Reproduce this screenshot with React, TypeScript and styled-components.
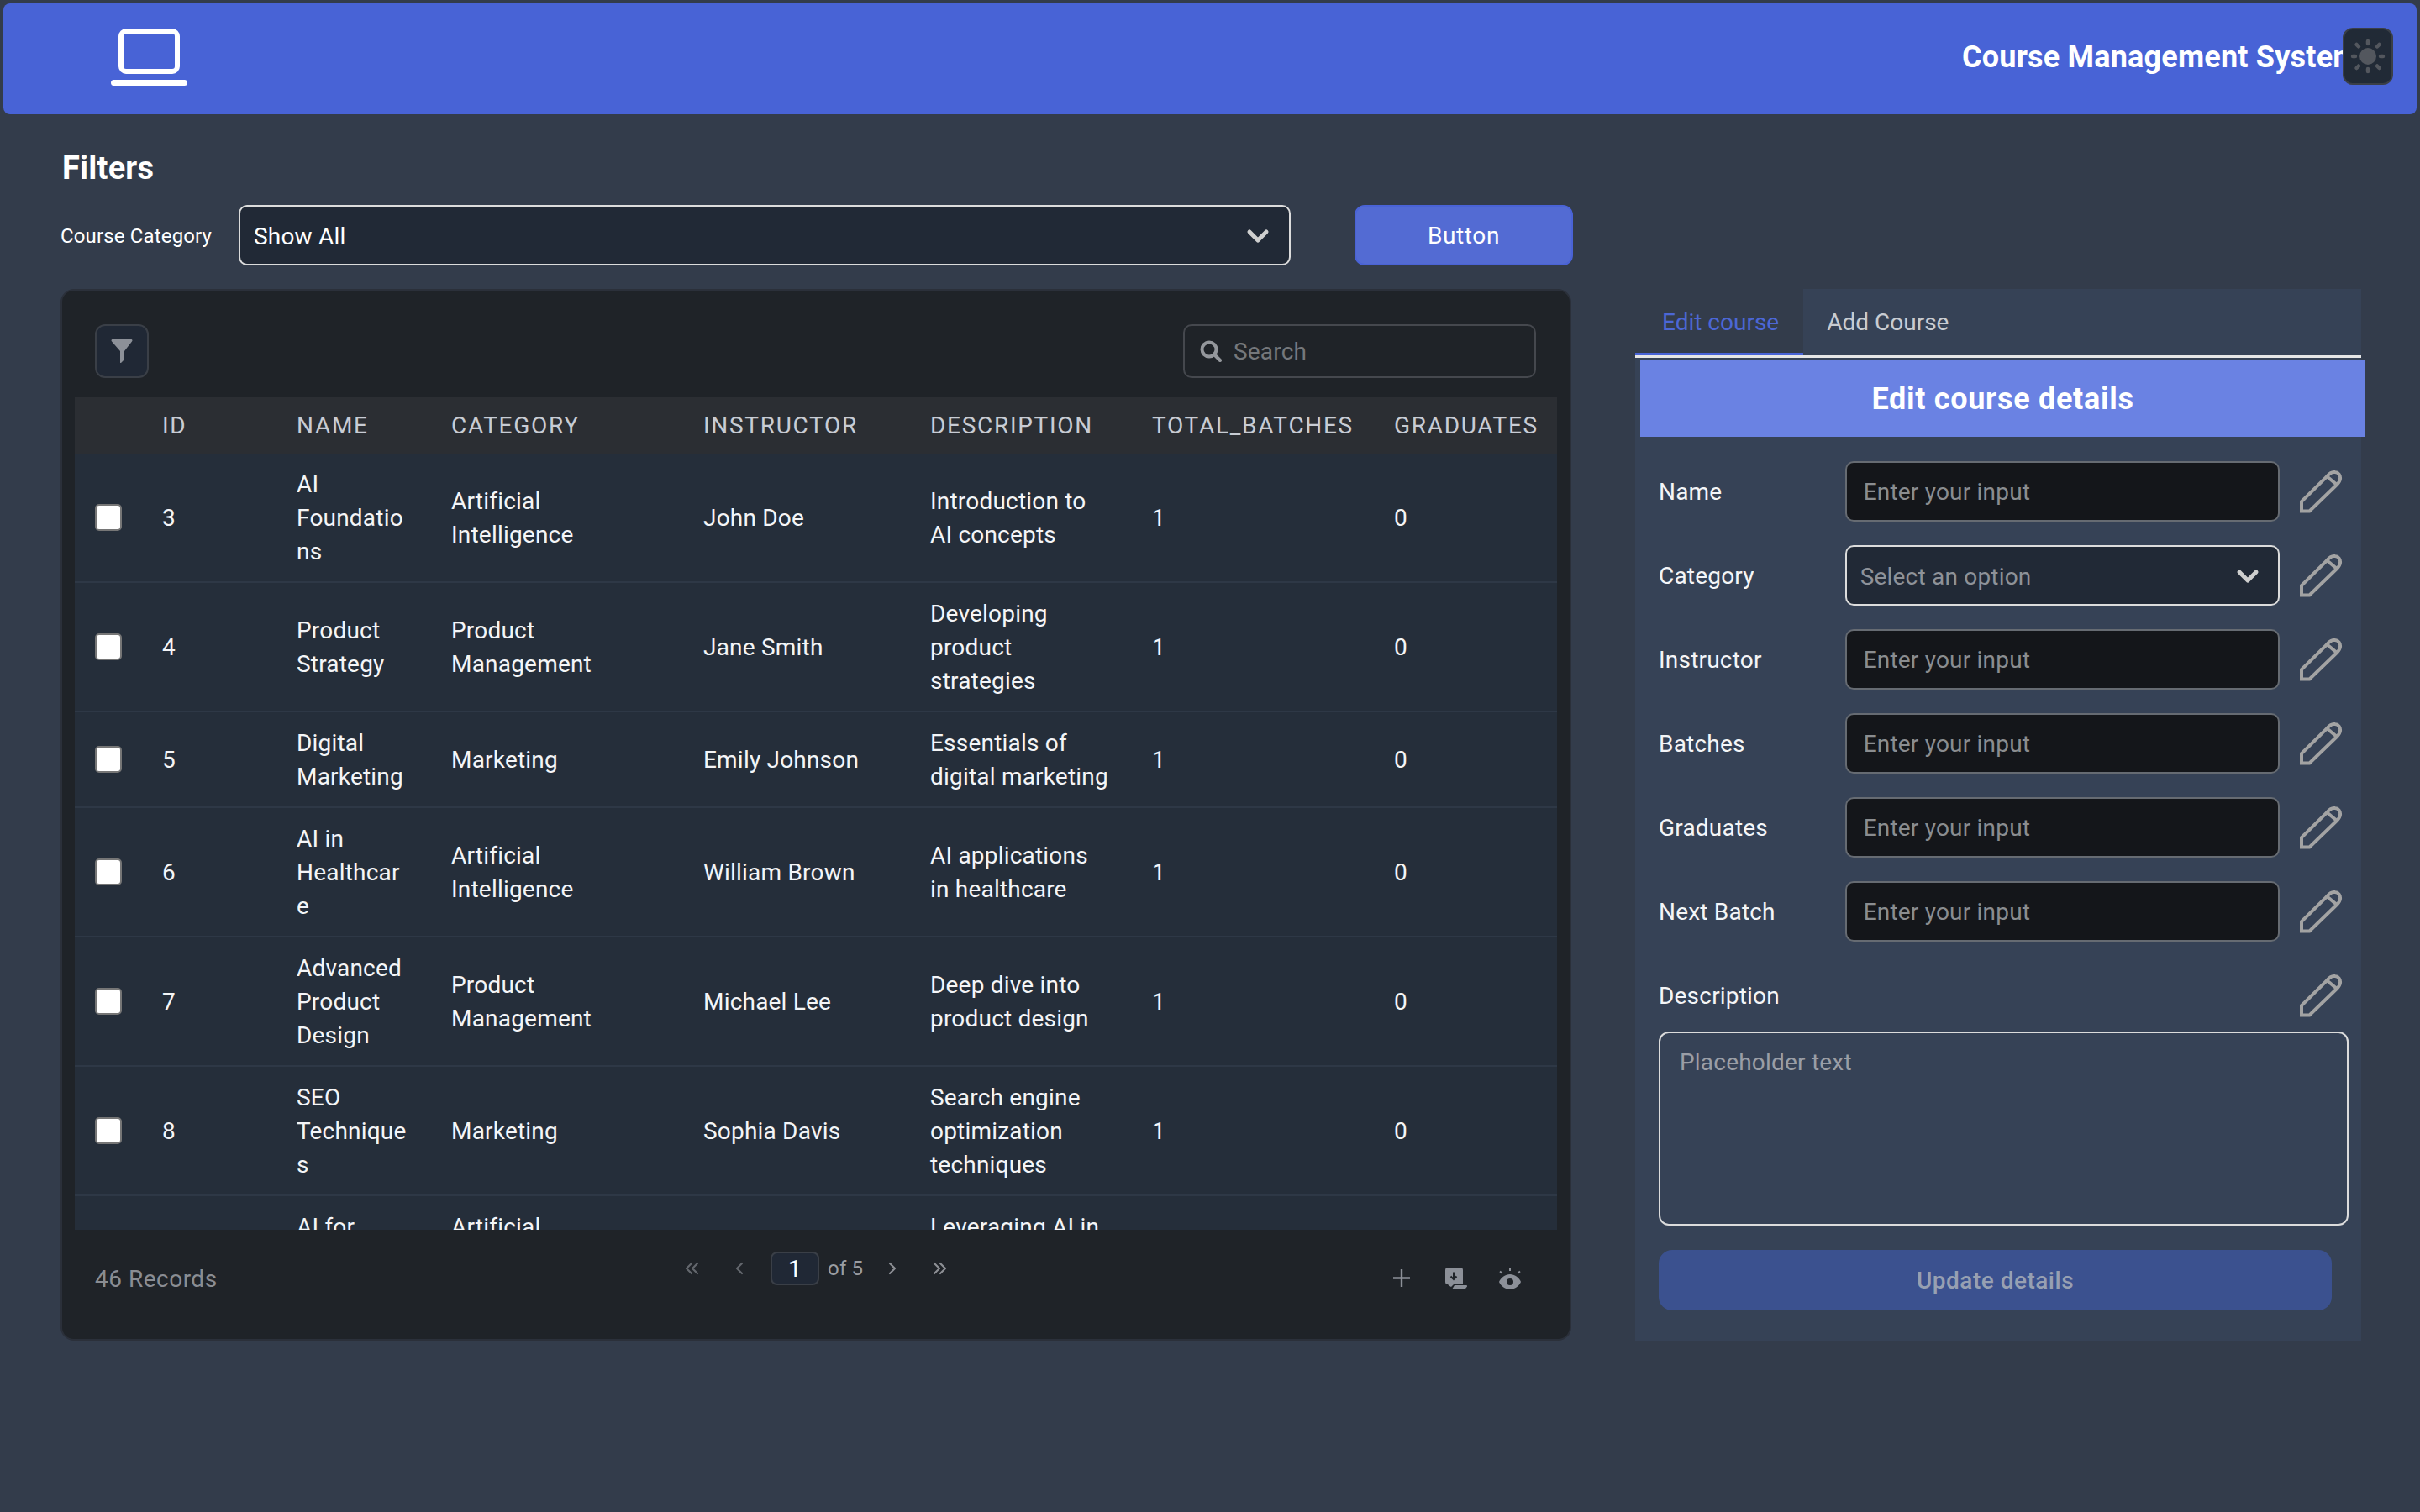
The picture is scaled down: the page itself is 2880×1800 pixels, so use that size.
import styled, { createGlobalStyle } from 'styled-components';

const GlobalStyle = createGlobalStyle`
  html, body {
    margin: 0;
    padding: 0;
    background: #333c4b;
  }
  * {
    box-sizing: border-box;
  }
`;

const FONT = `Roboto, "Noto Sans", sans-serif`;

const Page = styled.div`
  width: 2880px;
  height: 1800px;
  padding: 4px 4px 0;
  background: #333c4b;
  color: #fff;
  font-family: ${FONT};
  font-size: 28px;
  letter-spacing: 0.2px;
  overflow: hidden;
`;

const Header = styled.header`
  height: 132px;
  background: #4863d6;
  border-radius: 8px;
  display: flex;
  align-items: center;
  justify-content: space-between;
  padding: 0 28px 4px 128px;
`;

const HeaderRight = styled.div`
  display: flex;
  align-items: center;
  width: 513px;
`;

const HeaderTitle = styled.h1`
  margin: 0;
  flex: 0 0 453px;
  font-size: 36px;
  font-weight: 700;
  white-space: nowrap;
  overflow: hidden;
`;

const ThemeButton = styled.button`
  flex: 0 0 60px;
  height: 68px;
  margin-bottom: 2px;
  padding: 0;
  display: flex;
  align-items: center;
  justify-content: center;
  background: #212a36;
  border: 2px solid #3a3f47;
  border-radius: 12px;
`;

const Main = styled.main`
  padding: 0 64px 0 68px;
`;

const FiltersTitle = styled.h2`
  margin: 0;
  padding: 40px 0 0 2px;
  height: 108px;
  font-size: 38px;
  line-height: 48px;
  font-weight: 700;
`;

const FilterRow = styled.div`
  display: flex;
  align-items: center;
  height: 72px;
`;

const FilterLabel = styled.label`
  width: 212px;
  font-size: 24px;
  font-weight: 400;
  letter-spacing: 0.15px;
  padding-top: 1px;
`;

const SelectBox = styled.div<{ $compact?: boolean }>`
  display: flex;
  align-items: center;
  justify-content: space-between;
  height: 72px;
  width: ${(p) => (p.$compact ? '518px' : '1252px')};
  padding: 2px ${(p) => (p.$compact ? '22px' : '23px')} 0 16px;
  background: #212936;
  border: 2px solid #dcdcdc;
  border-radius: 10px;
  color: ${(p) => (p.$compact ? '#8e9299' : '#fff')};
`;

const FilterButton = styled.button`
  margin-left: 76px;
  width: 260px;
  height: 72px;
  background: #536bd3;
  border: 2px solid #4a63d6;
  border-radius: 12px;
  color: #fff;
  font: 400 28px ${FONT};
  letter-spacing: 0.6px;
`;

const Columns = styled.div`
  display: flex;
  align-items: flex-start;
  gap: 76px;
  margin-top: 28px;
`;

const TableCard = styled.section`
  flex: 0 0 1798px;
  height: 1252px;
  background: #1f2328;
  border: 2px solid #2b303a;
  border-radius: 16px;
  padding: 40px 15px 0;
`;

const TableToolbar = styled.div`
  display: flex;
  justify-content: space-between;
  height: 87px;
  padding: 0 25px 0 24px;
`;

const IconButton = styled.button`
  width: 64px;
  height: 64px;
  padding: 0;
  display: flex;
  align-items: center;
  justify-content: center;
  background: #202835;
  border: 2px solid #3a3f47;
  border-radius: 12px;
`;

const SearchBox = styled.div`
  width: 420px;
  height: 64px;
  display: flex;
  align-items: center;
  gap: 14px;
  padding: 0 18px;
  border: 2px solid #45484e;
  border-radius: 10px;
  color: #75787c;
`;

const TableWrap = styled.div`
  height: 991px;
  overflow: hidden;
`;

const Table = styled.table`
  width: 1764px;
  table-layout: fixed;
  border-collapse: collapse;
`;

const HeadRow = styled.tr`
  height: 67px;
  background: #2b2e33;
`;

const HeadCell = styled.th`
  padding: 0 0 0 24px;
  text-align: left;
  font-size: 28px;
  font-weight: 400;
  letter-spacing: 1.7px;
  color: #c8ccd4;
  white-space: nowrap;
`;

const Row = styled.tr`
  background: #252e3a;
  border-bottom: 2px solid #2e3846;
`;

const Cell = styled.td`
  padding: 17px 26px 15px 24px;
  line-height: 40px;
  overflow-wrap: anywhere;
  color: #f4f5f7;
`;

const Check = styled.span`
  display: block;
  width: 32px;
  height: 32px;
  margin-top: -2px;
  background: #fff;
  border: 2px solid #767676;
  border-radius: 5px;
`;

const TableFooter = styled.div`
  display: grid;
  grid-template-columns: 683px 1fr auto;
  align-items: center;
  height: 64px;
  margin-top: 26px;
  padding: 0 43px 0 24px;
`;

const Records = styled.div`
  color: #8a8d93;
  letter-spacing: 0.5px;
`;

const Pager = styled.div`
  align-self: start;
  display: flex;
  align-items: center;
  height: 40px;
  font-size: 24px;
`;

const PageArrow = styled.span`
  width: 56px;
  display: flex;
  justify-content: center;
`;

const PageInput = styled.span`
  width: 58px;
  height: 40px;
  margin: 0 10px 0 9px;
  display: flex;
  align-items: center;
  justify-content: center;
  background: #202835;
  border: 2px solid #3a3f47;
  border-radius: 8px;
  color: #fff;
  font-size: 28px;
`;

const PageOf = styled.span`
  width: 49px;
  color: #9a9da2;
`;

const FooterIcons = styled.div`
  display: flex;
  align-items: center;
  gap: 38px;
`;

const SidePanel = styled.aside`
  flex: 0 0 864px;
  min-width: 0;
  height: 1252px;
  background: #364256;
`;

const Tabs = styled.div`
  display: flex;
  height: 82px;
  border-bottom: 3px solid #e6e6e6;
  letter-spacing: 0;
`;

const Tab = styled.div<{ $active?: boolean }>`
  display: flex;
  align-items: center;
  padding: ${(p) => (p.$active ? '0 29px 0 32px' : '0 28px')};
  background: ${(p) => (p.$active ? '#333c4b' : 'transparent')};
  color: ${(p) => (p.$active ? '#4c67d6' : '#c8ccd2')};
  box-shadow: ${(p) => (p.$active ? 'inset 0 -3px 0 #4863d6' : 'none')};
`;

const PanelTitle = styled.h3`
  width: 863px;
  height: 92px;
  margin: 2px 0 0 6px;
  padding-top: 2px;
  display: flex;
  align-items: center;
  justify-content: center;
  background: #6a82e3;
  font-size: 36px;
  font-weight: 700;
  letter-spacing: 0.7px;
`;

const Form = styled.div`
  padding: 29px 22px 0 28px;
`;

const FormRow = styled.div`
  display: flex;
  align-items: center;
  height: 72px;
  margin-bottom: 28px;
`;

const FormLabel = styled.label`
  width: 222px;
  color: #f4f5f7;
`;

const TextInput = styled.div`
  width: 518px;
  height: 72px;
  display: flex;
  align-items: center;
  padding-left: 20px;
  background: #14161a;
  border: 2px solid #666b72;
  border-radius: 10px;
  color: #8a8d90;
`;

const EditSlot = styled.div`
  margin-left: 23px;
  width: 52px;
  height: 52px;
`;

const DescRow = styled.div`
  display: flex;
  align-items: center;
  justify-content: space-between;
  height: 52px;
  margin: 38px 0 17px;
`;

const TextArea = styled.div`
  width: 821px;
  height: 231px;
  padding: 18px 23px;
  border: 2px solid #dcdcdc;
  border-radius: 12px;
  color: #9a9ea6;
`;

const UpdateButton = styled.button`
  display: block;
  width: 801px;
  height: 72px;
  margin-top: 29px;
  background: #3b518f;
  border: 0;
  border-radius: 16px;
  color: #97a0b2;
  font: 500 28px ${FONT};
  letter-spacing: 0.5px;
`;

const Chevron = () => (
  <svg width="28" height="18" viewBox="0 0 28 18" fill="none" stroke="#cfcfcf" strokeWidth="5" strokeLinecap="round" strokeLinejoin="round">
    <path d="M4 4l10 10L24 4" />
  </svg>
);

const Pencil = () => (
  <svg width="52" height="52" viewBox="0 0 52 52" fill="none" stroke="#a3a3a3" strokeWidth="4">
    <path d="M3 49.500V38L33 8.500C36 4.500 40 2.500 43 3C47 3.500 49.500 7 49 11C48.700 14 47 16 45 18L12.500 49.500Z" />
    <path d="M33 8L45 18" />
  </svg>
);

const SunIcon = () => (
  <svg width="42" height="44" viewBox="0 0 42 44" fill="#53575e">
    <circle cx="21" cy="22" r="10" />
    <g stroke="#53575e" strokeWidth="4.500" strokeLinecap="round">
      <path d="M21 4v3M21 37v3M3 22h3M36 22h3M7.500 8l2.500 2.500M32 33.500l2.500 2.500M34.500 8L32 10.500M10 33.500L7.500 36" />
    </g>
  </svg>
);

const LaptopIcon = () => (
  <svg width="92" height="68" viewBox="0 0 92 68" fill="none" stroke="#fff" strokeWidth="6">
    <rect x="12" y="3" width="67" height="48" rx="6" />
    <path d="M3.500 64.500h84" strokeWidth="7" strokeLinecap="round" />
  </svg>
);

const FunnelIcon = () => (
  <svg width="26" height="28" viewBox="0 0 26 28" fill="#8c9098">
    <path d="M2 0h22c1.500 0 2 1.500 1 2.500L16 14v10l-4 4c-.5.300-1 0-1-.6V14L1 2.500C0 1.500.5 0 2 0z" />
  </svg>
);

const SearchIcon = () => (
  <svg width="26" height="26" viewBox="0 0 26 26" fill="none" stroke="#94979c" strokeWidth="4" strokeLinecap="round">
    <circle cx="11" cy="11" r="8.500" />
    <path d="M18 18l6 6" />
  </svg>
);

const ArrowIcon = ({ d, color }: { d: string; color: string }) => (
  <svg width="24" height="24" viewBox="0 0 24 24" fill="none" stroke={color} strokeWidth="2.200" strokeLinecap="round" strokeLinejoin="round">
    <path d={d} />
  </svg>
);

const PlusIcon = () => (
  <svg width="24" height="22" viewBox="0 0 24 22" stroke="#8c9098" strokeWidth="2.400">
    <path d="M10 0v21M0 10.500h20" />
  </svg>
);

const DownloadIcon = () => (
  <svg width="26" height="27" viewBox="0 0 26 27" fill="#8c9098">
    <path d="M3 0H18a3 3 0 0 1 3 3V19H11L7 23C5 22 4 21 3 20A3 3 0 0 1 0 17V3A3 3 0 0 1 3 0Z" />
    <path d="M11 21H25C26 21 26.500 22 26 22.500L24 25C23.500 25.700 23 26 22 26H8Z" />
    <path d="M10 5.500v8M6.500 10.500l3.500 3.500 3.500-3.500" fill="none" stroke="#1f2328" strokeWidth="2" />
  </svg>
);

const EyeIcon = () => (
  <svg width="26" height="27" viewBox="0 0 26 27" fill="#8c9098">
    <path d="M13 8c5.500 0 10.500 3.500 13 9-2.500 5.500-7.500 9-13 9S2.500 22.500 0 17C2.500 11.500 7.500 8 13 8z" />
    <circle cx="13" cy="17" r="4" fill="#1f2328" />
    <path d="M13 0v4M1 4.500l3 2.500M25 4.500L22 7" stroke="#8c9098" strokeWidth="2" fill="none" />
  </svg>
);

const columns = [80, 160, 184, 300, 270, 264, 288, 218];
const headings = ['', 'ID', 'NAME', 'CATEGORY', 'INSTRUCTOR', 'DESCRIPTION', 'TOTAL_BATCHES', 'GRADUATES'];

const courses = [
  { id: 3, name: 'AI Foundations', category: 'Artificial Intelligence', instructor: 'John Doe', description: 'Introduction to AI concepts' },
  { id: 4, name: 'Product Strategy', category: 'Product Management', instructor: 'Jane Smith', description: 'Developing product strategies' },
  { id: 5, name: 'Digital Marketing', category: 'Marketing', instructor: 'Emily Johnson', description: 'Essentials of digital marketing' },
  { id: 6, name: 'AI in Healthcare', category: 'Artificial Intelligence', instructor: 'William Brown', description: 'AI applications in healthcare' },
  { id: 7, name: 'Advanced Product Design', category: 'Product Management', instructor: 'Michael Lee', description: 'Deep dive into product design' },
  { id: 8, name: 'SEO Techniques', category: 'Marketing', instructor: 'Sophia Davis', description: 'Search engine optimization techniques' },
  { id: 9, name: 'AI for Finance', category: 'Artificial Intelligence', instructor: 'David Wilson', description: 'Leveraging AI in finance' },
];

const fields = ['Name', 'Category', 'Instructor', 'Batches', 'Graduates', 'Next Batch'];

export default function App() {
  return (
    <Page>
      <GlobalStyle />
      <Header>
        <LaptopIcon />
        <HeaderRight>
          <HeaderTitle>Course Management System</HeaderTitle>
          <ThemeButton>
            <SunIcon />
          </ThemeButton>
        </HeaderRight>
      </Header>
      <Main>
        <FiltersTitle>Filters</FiltersTitle>
        <FilterRow>
          <FilterLabel>Course Category</FilterLabel>
          <SelectBox>
            Show All
            <Chevron />
          </SelectBox>
          <FilterButton>Button</FilterButton>
        </FilterRow>
        <Columns>
          <TableCard>
            <TableToolbar>
              <IconButton>
                <FunnelIcon />
              </IconButton>
              <SearchBox>
                <SearchIcon />
                Search
              </SearchBox>
            </TableToolbar>
            <TableWrap>
              <Table>
                <colgroup>
                  {columns.map((w, i) => (
                    <col key={i} width={w} />
                  ))}
                </colgroup>
                <thead>
                  <HeadRow>
                    {headings.map((h) => (
                      <HeadCell key={h}>{h}</HeadCell>
                    ))}
                  </HeadRow>
                </thead>
                <tbody>
                  {courses.map((c) => (
                    <Row key={c.id}>
                      <Cell>
                        <Check />
                      </Cell>
                      <Cell>{c.id}</Cell>
                      <Cell>{c.name}</Cell>
                      <Cell>{c.category}</Cell>
                      <Cell>{c.instructor}</Cell>
                      <Cell>{c.description}</Cell>
                      <Cell>1</Cell>
                      <Cell>0</Cell>
                    </Row>
                  ))}
                </tbody>
              </Table>
            </TableWrap>
            <TableFooter>
              <Records>46 Records</Records>
              <Pager>
                <PageArrow>
                  <ArrowIcon d="M11 6l-6 6 6 6M18 6l-6 6 6 6" color="#63676d" />
                </PageArrow>
                <PageArrow>
                  <ArrowIcon d="M15 6l-6 6 6 6" color="#63676d" />
                </PageArrow>
                <PageInput>1</PageInput>
                <PageOf>of 5</PageOf>
                <PageArrow>
                  <ArrowIcon d="M9 6l6 6-6 6" color="#8c8f94" />
                </PageArrow>
                <PageArrow>
                  <ArrowIcon d="M6 6l6 6-6 6M13 6l6 6-6 6" color="#8c8f94" />
                </PageArrow>
              </Pager>
              <FooterIcons>
                <PlusIcon />
                <DownloadIcon />
                <EyeIcon />
              </FooterIcons>
            </TableFooter>
          </TableCard>
          <SidePanel>
            <Tabs>
              <Tab $active>Edit course</Tab>
              <Tab>Add Course</Tab>
            </Tabs>
            <PanelTitle>Edit course details</PanelTitle>
            <Form>
              {fields.map((f) => (
                <FormRow key={f}>
                  <FormLabel>{f}</FormLabel>
                  {f === 'Category' ? (
                    <SelectBox $compact>
                      Select an option
                      <Chevron />
                    </SelectBox>
                  ) : (
                    <TextInput>Enter your input</TextInput>
                  )}
                  <EditSlot>
                    <Pencil />
                  </EditSlot>
                </FormRow>
              ))}
              <DescRow>
                <FormLabel>Description</FormLabel>
                <Pencil />
              </DescRow>
              <TextArea>Placeholder text</TextArea>
              <UpdateButton>Update details</UpdateButton>
            </Form>
          </SidePanel>
        </Columns>
      </Main>
    </Page>
  );
}
